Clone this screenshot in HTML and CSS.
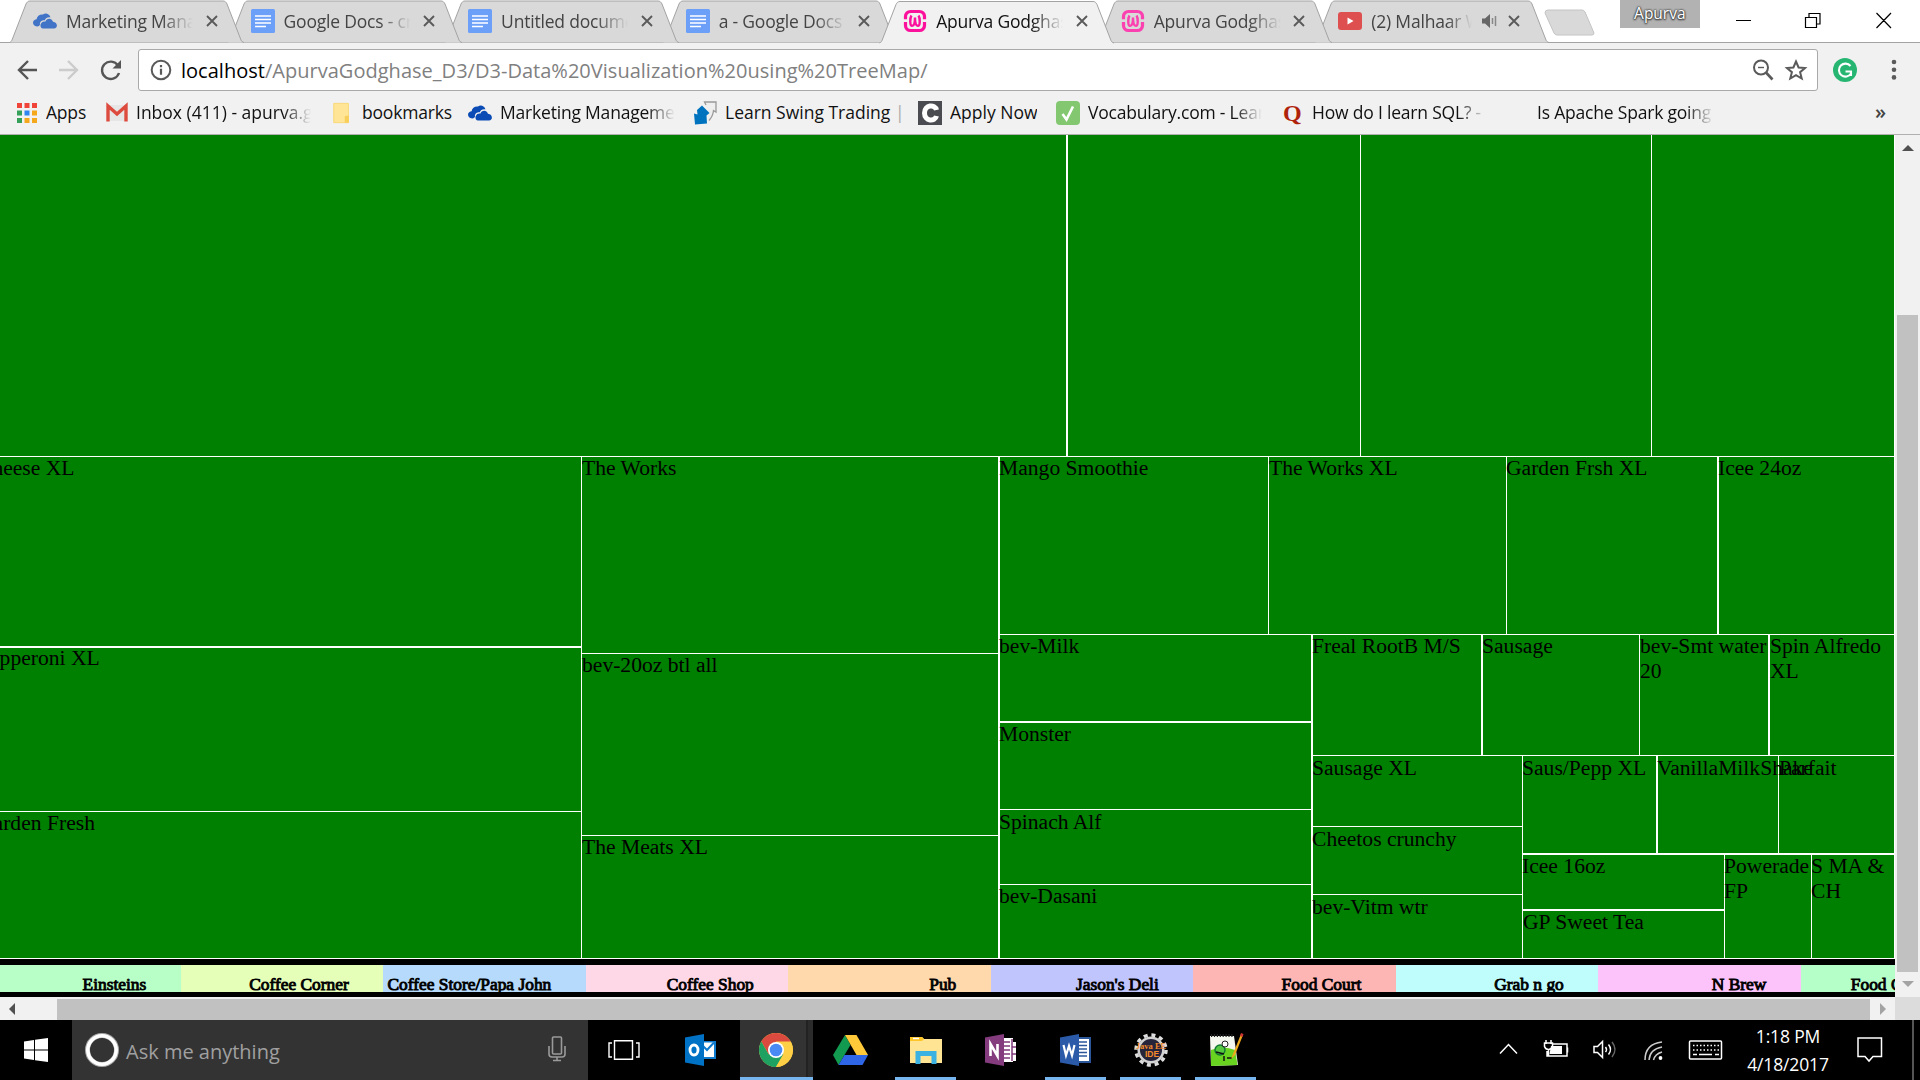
FILE: index.html
```html
<!DOCTYPE html>
<html lang="en">
<head>
<meta charset="utf-8">
<title>Apurva Godghase</title>
<link rel="stylesheet" href="styles.css">
</head>
<body>
<svg width="0" height="0" class="defs">
  <defs>
    <symbol id="tab" viewBox="0 0 236 43"><path class="shape" d="M0.5 42.5 C2 42 2.500 41 3 40 L17 4 C18 2 19 1 21 1 H214 C216 1 217 2 218 4 L232 40 C232.500 41 233 42 235 42.500"/></symbol>
    <symbol id="x" viewBox="0 0 12 12"><path d="M1 1 L11 11 M11 1 L1 11" stroke="#5a5a5a" stroke-width="1.900" fill="none"/></symbol>
    <symbol id="cloud" viewBox="0 0 24 16"><path d="M5 13.500C2 13.500 0 12 0 9.800C0 7.500 2 6.400 3.600 6.300C4 3 7 1 10 1.500C12 0 16 0 17.500 4.500C15 3.800 12.500 5 11.800 7.300C8 7 6.500 9.500 7 12Z"/><path d="M10 15.500C7.500 15.500 7 12.500 7.800 11C8.600 9 10.500 8.200 12.500 8.600C13 5.500 18.500 4 20 8.700C25 9 25 15.500 21 15.500Z"/></symbol>
    <symbol id="doc" viewBox="0 0 24 24"><rect width="24" height="24" rx="1.500" fill="#6b9ff8"/><path d="M4 7h16M4 10.500h16M4 14h16M4 17.500h11" stroke="#fff" stroke-width="1.400"/></symbol>
    <symbol id="wamp" viewBox="0 0 24 24"><path d="M2.500 10.200V7.500A5 5 0 0 1 7.500 2.500h9a5 5 0 0 1 5 5v2.700M21.500 13v3.500a5 5 0 0 1-5 5h-9a5 5 0 0 1-5-5v-3.500" fill="none" stroke="currentColor" stroke-width="3.200"/><path d="M8.500 6.500C6.800 9 6.800 16.500 8.800 16.800C11 17 12 15 12 8.500C12 15 13 17 15.200 16.800C17.200 16.500 17.200 9 15.500 6.500" fill="none" stroke="currentColor" stroke-width="2.400"/></symbol>
  </defs>
</svg>

<div class="tabstrip">
  <div class="tab t1"><svg class="bg"><use href="#tab"/></svg><svg class="fav cloud dim"><use href="#cloud"/></svg><span class="title">Marketing Manage</span><svg class="close"><use href="#x"/></svg></div>
  <div class="tab t2"><svg class="bg"><use href="#tab"/></svg><svg class="fav"><use href="#doc"/></svg><span class="title">Google Docs - create</span><svg class="close"><use href="#x"/></svg></div>
  <div class="tab t3"><svg class="bg"><use href="#tab"/></svg><svg class="fav"><use href="#doc"/></svg><span class="title">Untitled document</span><svg class="close"><use href="#x"/></svg></div>
  <div class="tab t4"><svg class="bg"><use href="#tab"/></svg><svg class="fav"><use href="#doc"/></svg><span class="title">a - Google Docs</span><svg class="close"><use href="#x"/></svg></div>
  <div class="tab active"><svg class="bg"><use href="#tab"/></svg><svg class="fav"><use href="#wamp"/></svg><span class="title">Apurva Godghase</span><svg class="close"><use href="#x"/></svg></div>
  <div class="tab t6"><svg class="bg"><use href="#tab"/></svg><svg class="fav pinkdim"><use href="#wamp"/></svg><span class="title">Apurva Godghase</span><svg class="close"><use href="#x"/></svg></div>
  <div class="tab t7"><svg class="bg"><use href="#tab"/></svg><svg class="fav" viewBox="0 0 24 24"><rect y="3" width="24" height="18" rx="3" fill="#de5050"/><path d="M9.500 8.500v7l6-3.500z" fill="#fff"/></svg><span class="title short">(2) Malhaar Wedding</span><svg class="spk" viewBox="0 0 16 14"><path d="M0 4.500h3L8 0v14l-5-4.500H0z" fill="#666"/><path d="M10.500 4v6M13.500 2v10" stroke="#888" stroke-width="1.500"/></svg><svg class="close"><use href="#x"/></svg></div>
  <svg class="newtab" viewBox="0 0 52 27"><path d="M4 1H38Q40 1 41 3L50 24Q50 26 48 26H13Q11 26 10 24L1 4Q1 1 4 1Z" fill="#d9d9d9" stroke="#c4c4c4"/></svg>
  <div class="user">Apurva</div>
  <svg class="winctl" viewBox="0 0 160 20" fill="none" stroke="#000" stroke-width="1.200"><path d="M0 10.500h15M69.500 7.500h11v10h-11zM73 7V3.500h11v10.500h-3.500M140.500 3l14.500 15M155 3l-14.500 15"/></svg>
</div>

<div class="toolbar">
  <svg class="nav" viewBox="0 0 106 24" fill="none" stroke-width="2.400"><path d="M21 12H3M12 3L3 12L12 21" stroke="#555"/><path d="M43 12H61M52 3L61 12L52 21" stroke="#ccc"/><path d="M102 7.500A8.700 8.700 0 1 0 103 15" stroke="#555" /><path d="M105 2V10.500H96.500Z" fill="#555"/></svg>
  <div class="omni">
    <svg class="info" viewBox="0 0 22 22"><circle cx="11" cy="11" r="9.300" fill="none" stroke="#5a5a5a" stroke-width="2"/><path d="M11 6v2.200M11 9.800v6" stroke="#5a5a5a" stroke-width="2.200"/></svg>
    <span class="url"><b>localhost</b>/ApurvaGodghase_D3/D3-Data%20Visualization%20using%20TreeMap/</span>
    <svg class="omniicons" viewBox="0 0 56 24" fill="none" stroke="#5a5a5a" stroke-width="2"><circle cx="9" cy="9.500" r="7"/><path d="M14 14.500L20.500 21.500" stroke-width="2.600"/><path d="M6 9.500h6" stroke-width="1.400"/><path d="M44 3.500l2.600 6 6.400.5-4.900 4.200 1.600 6.300-5.700-3.400-5.700 3.400 1.600-6.300-4.900-4.200 6.400-.5z"/></svg>
  </div>
  <svg class="gram" viewBox="0 0 24 24"><circle cx="12" cy="12" r="12" fill="#26b672"/><path d="M17.500 8A6.500 6.500 0 1 0 18 15.500M12.500 13.500h5.500v4.500" fill="none" stroke="#fff" stroke-width="2.100"/></svg>
  <svg class="dots" viewBox="0 0 6 22" fill="#5a5a5a"><circle cx="3" cy="3" r="2.300"/><circle cx="3" cy="10.700" r="2.300"/><circle cx="3" cy="18.400" r="2.300"/></svg>
</div>

<div class="bookmarks">
  <a class="bm b1"><svg class="i20" viewBox="0 0 20 20"><path d="M0 0h5v5H0zM7.500 0h5v5h-5zM15 0h5v5h-5z" fill="#f04438"/><path d="M0 7.500h5v5H0zM0 15h5v5H0z" fill="#34a05a"/><path d="M7.500 7.500h5v5h-5z" fill="#2f86f0"/><path d="M15 7.500h5v5h-5zM7.500 15h5v5h-5zM15 15h5v5h-5z" fill="#f5a81c"/></svg><span>Apps</span></a>
  <a class="bm b2"><svg class="i22" viewBox="0 0 22 18"><rect x="1" y="1" width="20" height="16" fill="#e6e6e6"/><path d="M2 17.500V2L11 10L20 2V17.500" fill="none" stroke="#dd4b3e" stroke-width="3.400"/></svg><span class="fade">Inbox (411) - apurva.god</span></a>
  <a class="bm b3"><svg class="i22" viewBox="0 0 22 24"><path d="M2 1.500h16v21H2z" fill="#ffe595" stroke="#f8d873"/><path d="M14 22.500v-6q0-1.500 1.500-1.500h3v7.500z" fill="#f8cf5a"/></svg><span>bookmarks</span></a>
  <a class="bm b4"><svg class="i24 cloud deep"><use href="#cloud"/></svg><span class="fade">Marketing Management</span></a>
  <a class="bm b5"><svg class="i24" viewBox="0 0 24 24"><path d="M13 4L11.500 1H23V11L20.500 9.500Q20 15 16 19.500" fill="#eee" stroke="#999" stroke-width="1.300"/><path d="M9 4.500L16.500 12L13.500 14.500L14 22.500L2 23.500L1 12.500L4.500 13.500L4 9Z" fill="#0073bf"/></svg><span>Learn Swing Trading <em>|</em></span></a>
  <a class="bm b6"><svg class="i24" viewBox="0 0 24 24"><rect width="24" height="24" fill="#4b4b52"/><path d="M18.500 9C17 3 6.500 3.500 6.500 12S17 21 18.500 15" fill="none" stroke="#fff" stroke-width="5"/></svg><span>Apply Now</span></a>
  <a class="bm b7"><svg class="i24" viewBox="0 0 24 24"><rect width="24" height="24" rx="4" fill="#83c870"/><path d="M6.500 13l4 5.500L17 5.500" fill="none" stroke="#fff" stroke-width="2.600"/></svg><span class="fade">Vocabulary.com - Learn W</span></a>
  <a class="bm b8"><i class="quora">Q</i><span class="fade">How do I learn SQL? - Quora</span></a>
  <a class="bm b9"><span class="fade">Is Apache Spark going to</span></a>
  <i class="more">»</i>
</div>

<div class="viewport">
  <div class="page">
    <div class="map col">
      <div class="row" style="height:321px">
        <div class="cell gap-r" style="width:1066px"></div><div class="cell" style="width:292px"></div><div class="cell" style="width:290px"></div><div class="cell"></div>
      </div>
      <div class="row">
        <div class="col" style="width:581px">
          <div class="cell gap-b" style="height:189px"><p class="cut">Cheese XL</p></div>
          <div class="cell" style="height:163px"><p class="cut up1">Pepperoni XL</p></div>
          <div class="cell"><p class="cut">Garden Fresh</p></div>
        </div>
        <div class="col gap-r" style="width:416px">
          <div class="cell" style="height:196px"><p class="in">The Works</p></div>
          <div class="cell" style="height:181px"><p class="in">bev-20oz btl all</p></div>
          <div class="cell"><p class="in">The Meats XL</p></div>
        </div>
        <div class="col">
          <div class="row" style="height:177px">
            <div class="cell" style="width:268px"><p>Mango Smoothie</p></div>
            <div class="cell" style="width:237px"><p class="in">The Works XL</p></div>
            <div class="cell gap-r" style="width:210px"><p>Garden Frsh XL</p></div>
            <div class="cell"><p>Icee 24oz</p></div>
          </div>
          <div class="row">
            <div class="col gap-r" style="width:311px">
              <div class="cell gap-b" style="height:86px"><p>bev-Milk</p></div>
              <div class="cell" style="height:86px"><p>Monster</p></div>
              <div class="cell" style="height:74px"><p class="down1">Spinach Alf</p></div>
              <div class="cell"><p>bev-Dasani</p></div>
            </div>
            <div class="col">
              <div class="row" style="height:120px">
                <div class="cell gap-r" style="width:168px"><p>Freal RootB M/S</p></div>
                <div class="cell" style="width:156px"><p>Sausage</p></div>
                <div class="cell gap-r" style="width:128px"><p class="in">bev-Smt water 20</p></div>
                <div class="cell"><p class="in">Spin Alfredo XL</p></div>
              </div>
              <div class="row">
                <div class="col" style="width:209px">
                  <div class="cell" style="height:70px"><p class="down1">Sausage XL</p></div>
                  <div class="cell" style="height:67px"><p class="down1">Cheetos crunchy</p></div>
                  <div class="cell"><p class="down1">bev-Vitm wtr</p></div>
                </div>
                <div class="col">
                  <div class="row gap-b" style="height:97px">
                    <div class="cell gap-r" style="width:133px"><p class="down1">Saus/Pepp XL</p></div>
                    <div class="cell" style="width:120px"><p class="down1">VanillaMilkShake</p></div>
                    <div class="cell"><p class="down1 in">Parfait</p></div>
                  </div>
                  <div class="row">
                    <div class="col" style="width:201px">
                      <div class="cell gap-b" style="height:54px"><p>Icee 16oz</p></div>
                      <div class="cell"><p class="in">GP Sweet Tea</p></div>
                    </div>
                    <div class="cell" style="width:86px"><p>Powerade FP</p></div>
                    <div class="cell"><p>S MA &amp; CH</p></div>
                  </div>
                </div>
              </div>
            </div>
          </div>
        </div>
      </div>
    </div>
    <div class="legend">
      <span class="c1">Einsteins</span><span class="c2">Coffee Corner</span><span class="c3">Coffee Store/Papa John</span><span class="c4">Coffee Shop</span><span class="c5">Pub</span><span class="c6">Jason's Deli</span><span class="c7">Food Court</span><span class="c8">Grab n go</span><span class="c9">N Brew</span><span class="c10">Food Court</span>
    </div>
  </div>
  <div class="vbar"><i class="up"></i><i class="thumb"></i><i class="down"></i></div>
</div>
<div class="hbar"><i class="left"></i><i class="thumb"></i><i class="right"></i><i class="corner"></i></div>

<div class="taskbar">
  <div class="start"><svg viewBox="0 0 24 24"><path d="M0 3.500L10 2v9.500H0zM11 1.800L24 0v11.500H11zM0 12.500h10V22L0 20.500zM11 12.500h13V24L11 22.200z" fill="#fff"/></svg></div>
  <div class="search">
    <svg class="ring" viewBox="0 0 34 34"><circle cx="17" cy="17" r="14.500" fill="none" stroke="#aaa" stroke-width="5"/><circle cx="17" cy="17" r="14.200" fill="none" stroke="#fff" stroke-width="3.600"/></svg>
    <span>Ask me anything</span>
    <svg class="mic" viewBox="0 0 18 26" fill="none" stroke="#9a9a9a" stroke-width="1.600"><rect x="4.500" y="1" width="9" height="17" rx="1"/><path d="M1 10v8q0 3 3 3h10q3 0 3-3v-8M9 21v3.500M5 24.500h8"/></svg>
  </div>
  <div class="apps">
    <div class="app"><svg class="tv" viewBox="0 0 32 20" fill="none" stroke="#fff" stroke-width="1.400"><path d="M4 3H1v14h3M28 3h3v14h-3M6.500 .7h18v18.600h-18z"/></svg></div>
    <div class="app"><svg viewBox="0 0 34 34"><path d="M18 8h14v18H18z" fill="#0f7bcf"/><path d="M18 9.500h12V24H18z" fill="#fff"/><path d="M18 12l5 5 7-7.500" fill="none" stroke="#0f7bcf" stroke-width="2"/><path d="M1 4.500L20 1v32L1 29.500z" fill="#0072c6"/><ellipse cx="10" cy="17" rx="4" ry="5" fill="none" stroke="#fff" stroke-width="2.800"/></svg></div>
    <div class="app on chrome"><svg viewBox="0 0 34 34"><circle cx="17" cy="17" r="17" fill="#ffcf45"/><path d="M2.300 8.500A17 17 0 0 1 31.700 8.500H17L9.600 21.300z" fill="#db4a3f"/><path d="M2.300 8.500A17 17 0 0 0 17 34L24.400 21.300H9.600z" fill="#1fa162"/><path d="M17 9H32a17 17 0 0 1-15 25l7.400-12.700z" fill="#ffcf45"/><circle cx="17" cy="17" r="8" fill="#fff"/><circle cx="17" cy="17" r="6.300" fill="#4a8af4"/></svg></div>
    <div class="app"><svg class="drive" viewBox="0 0 35 30"><path d="M12 0L0 20l5.500 10L17.500 10z" fill="#129a51"/><path d="M12 0h11.500L35 20H23.500z" fill="#ffc93a"/><path d="M11.500 20H35l-5.500 10h-24z" fill="#2f66e8"/></svg></div>
    <div class="app on"><svg viewBox="0 0 34 34"><path d="M1 4h12l2 2h18v24H1z" fill="#ffe494"/><path d="M1 4h12l2 2-2 2H1z" fill="#ffc627"/><path d="M4 5.500h6" stroke="#fff" stroke-width="1.400"/><path d="M6.500 31V18h21v13h-5v-8h-11v8z" fill="#3cb2e2"/></svg></div>
    <div class="app"><svg viewBox="0 0 34 34"><path d="M18 5h11v4h3v19h-3v1H18z" fill="#fff"/><path d="M20 9h6M20 13h6M20 17h6M20 21h6M20 25h6M28 6v22M28 14h4M28 21h4" stroke="#80397b" stroke-width="1.500"/><path d="M1 4.500L20 1v32L1 29.500z" fill="#843c7e"/><path d="M6.500 23V11l7 12V11" fill="none" stroke="#fff" stroke-width="2.600"/></svg></div>
    <div class="app on"><svg viewBox="0 0 34 34"><path d="M18 4h14v26H18z" fill="#2b579a"/><path d="M18 6h12v22H18z" fill="#fff"/><path d="M20 9h8M20 12.500h8M20 16h8M20 19.500h8M20 23h8" stroke="#2b579a" stroke-width="1.700"/><path d="M1 4.500L20 1v32L1 29.500z" fill="#2b5ba8"/><path d="M4.500 12l2.500 10.500 3-9.500 3 9.500L15.500 12" fill="none" stroke="#fff" stroke-width="2.200"/></svg></div>
    <div class="app on"><svg viewBox="0 0 34 34"><circle cx="17" cy="17" r="15" fill="none" stroke="#ddd" stroke-width="3.500" stroke-dasharray="4 3.850"/><circle cx="17" cy="17" r="12.300" fill="#26243a" stroke="#d2d2d2" stroke-width="2.500"/><g fill="#f58a2b" text-anchor="middle"><text x="17" y="15.500" class="jee">Java EE</text><text x="18" y="23.500" class="ide">IDE</text></g></svg></div>
    <div class="app on"><svg viewBox="0 0 34 34"><path d="M1 3h24l4 29L2 33z" fill="#f4f8ee"/><path d="M2 17q12-5 24 0l2.500 15L2 33z" fill="#68d420"/><path d="M2 2.500h22" stroke="#222" stroke-width="3" stroke-dasharray="1.200 1.700"/><ellipse cx="11" cy="17" rx="5" ry="5" fill="#55c840" stroke="#173" stroke-width="1.400"/><circle cx="16" cy="11" r="3" fill="#fff" stroke="#222"/><path d="M7 19l8 2M15 23v5M18 25h5" stroke="#111" stroke-width="1.500"/><path d="M22 26l2-5L32 1l2 1-8 20z" fill="#f0a91b"/><path d="M31 3l1-3 2.500 1-1 3z" fill="#c33"/></svg></div>
  </div>
  <div class="tray">
    <svg class="glyphs" viewBox="0 0 226 28" fill="none" stroke="#fff" stroke-width="1.500"><path d="M1 17.500L9.500 8.500L18 17.500"/><path d="M54 8h14v12H48V15M68.500 11.500v5M47 4v4M52 4v4M45.500 7h8v3.500q-1 3-4 3t-4-3zM49.500 13v7"/><path d="M52 10h11v8H50.500z" fill="#fff" stroke="none"/><path d="M95 10.500h3.500l5-5v16l-5-5H95zM106.500 11q2 2.500 0 5M109.500 8.500q4 5 0 10"/><path d="M113 6q6 7.500 0 15" stroke="#666"/><g stroke="#ccc"><path d="M146 24Q146 8 163 6M150 24Q151 13 163 11M154.500 24Q156 18 163 16"/></g><circle cx="161.500" cy="22" r="1.900" fill="#fff" stroke="none"/><rect x="190.500" y="5" width="32" height="18" rx="1"/><path d="M194 9.500h26M194 14h26" stroke-dasharray="1.500 2"/><path d="M194 18.500h4M200 18.500h13M216 18.500h4"/></svg>
    <div class="clock"><span>1:18 PM</span><span>4/18/2017</span></div>
    <svg class="action" viewBox="0 0 26 26" fill="none" stroke="#fff" stroke-width="1.500"><path d="M1 1h23.500v18.500H16l-4 4.500-4-4.500H1z"/></svg>
    <i class="peek"></i>
  </div>
</div>
</body>
</html>
```
FILE: styles.css
```css
* { box-sizing: border-box; }
body { margin: 0; width: 1920px; height: 1080px; overflow: hidden; display: flex; flex-direction: column; background: #fff; font-family: "Open Sans", "Noto Sans", sans-serif; }
.defs { position: absolute; }
svg { display: block; flex: none; overflow: visible; }
i, em { font-style: normal; }

/* Tab strip */
.tabstrip { height: 43px; flex: none; display: flex; align-items: flex-start; padding-left: 9px; background: #fff; box-shadow: inset 0 -1px #a3a3a3; }
.tab { position: relative; width: 235.550px; height: 43px; margin-right: -18px; display: flex; align-items: center; padding: 0 0 1px 24px; flex: none; color: #444; }
.tab .bg { position: absolute; left: 0; top: 0; width: 236px; height: 43px; z-index: -1; fill: #d9d9d9; stroke: #a3a3a3; stroke-width: 1; }
.t1 { z-index: 6; } .t2 { z-index: 5; } .t3 { z-index: 4; } .t4 { z-index: 3; } .t6 { z-index: 2; } .t7 { z-index: 1; }
.active { z-index: 9; color: #111; }
.tab.active .bg { fill: #f1f1f1; height: 44px; }
.fav { width: 24px; height: 24px; color: #fb119c; }
.fav.cloud { height: 16px; }
.dim { fill: #4173c6; }
.pinkdim { color: #fb40b0; }
.title { width: 127px; margin-left: 9px; font-size: 17.500px; line-height: 24px; letter-spacing: -0.200px; white-space: nowrap; overflow: hidden; -webkit-mask-image: linear-gradient(90deg, #000 75%, transparent); mask-image: linear-gradient(90deg, #000 75%, transparent); }
.title.short { width: 101px; }
.spk { width: 16px; height: 14px; margin: 0 0 0 10px; }
.close { width: 12px; height: 12px; margin-left: 12.500px; }
.spk + .close { margin-left: 10px; }
.newtab { width: 52px; height: 27px; margin: 9px 0 0 12px; }
.user { width: 80px; height: 28px; margin-left: 24px; background: #b2b2b2; color: #fff; font-size: 15.500px; line-height: 27px; text-align: center; text-shadow: 0 0 2px #333, 0 0 2px #333, 0 1px 2px #333; }
.winctl { width: 160px; height: 20px; margin: 10px 0 0 36px; }

/* Toolbar */
.toolbar { height: 52px; flex: none; display: flex; align-items: center; background: #f1f1f1; padding-left: 16px; }
.nav { width: 106px; height: 24px; margin-top: 2px; }
.omni { width: 1680px; height: 42px; margin-left: 16px; margin-top: 1px; display: flex; align-items: center; background: #fff; border: 1px solid #a9a9a9; border-radius: 3px; padding-left: 11px; }
.info { width: 22px; height: 22px; margin-top: 1px; }
.url { margin: 2px auto 0 9px; font-size: 20px; line-height: 28px; color: #808080; white-space: nowrap; letter-spacing: 0.020px; }
.url b { font-weight: 400; color: #000; }
.omniicons { width: 56px; height: 24px; margin: 1px 9px 0 0; }
.gram { width: 24px; height: 24px; margin: 2px 0 0 15px; }
.dots { width: 6px; height: 22px; margin: 2px 0 0 34px; }

/* Bookmarks */
.bookmarks { height: 40px; flex: none; display: flex; background: #f1f1f1; border-bottom: 1px solid #b0b0b0; padding-left: 17px; color: #111; }
.bm { display: flex; align-items: center; flex: none; height: 36px; font-size: 17.500px; letter-spacing: -0.200px; white-space: nowrap; }
.bm span { margin-left: 9px; overflow: hidden; line-height: 24px; margin-top: -2px; }
.b1 { width: 89px; } .b2 { width: 225px; } .b3 { width: 137px; } .b4 { width: 225px; } .b5 { width: 225px; }
.b6 { width: 138px; } .b7 { width: 227px; } .b8 { width: 253px; } .b9 { width: 339px; }
.bm.b2 span { width: 175px; margin-left: 8px; letter-spacing: 0; } .bm.b4 span { width: 175px; margin-left: 8px; }
.bm.b5 span { margin-left: 8px; letter-spacing: 0; }
.b5 em { color: #aaa; }
.bm.b7 span, .bm.b8 span { width: 174px; margin-left: 8px; } .bm.b9 span { width: 177px; margin-left: 1px; }
.bm.b6 span { margin-left: 8px; letter-spacing: 0; }
.fade { -webkit-mask-image: linear-gradient(90deg, #000 84%, transparent); mask-image: linear-gradient(90deg, #000 84%, transparent); }
.i20 { width: 20px; height: 20px; } .i22 { width: 22px; height: 22px; } .i24 { width: 24px; height: 24px; }
.cloud.i24 { height: 16px; } .deep { fill: #0a4bb5; }
.quora { width: 21px; font: bold 24px "Liberation Serif", serif; color: #b0230b; }
.more { font-size: 20px; line-height: 34px; color: #444; font-weight: 600; }

/* Page area */
.viewport { height: 862px; flex: none; display: flex; }
.page { width: 1895px; height: 862px; overflow: hidden; background: #000; }
.map { width: 1895px; height: 824px; background: #fff; padding: 0 1px 1px 0; }
.row, .col { display: flex; gap: 1px; flex: none; min-width: 0; min-height: 0; }
.col { flex-direction: column; }
.row > :last-child, .col > :last-child { flex: 1; }
.gap-r { margin-right: 1px; }
.gap-b { margin-bottom: 1px; }
.cell { background: green; flex: none; min-width: 0; min-height: 0; }
.cell p { position: relative; margin: -1px 0 0 -1px; font: 21.600px/25px "Liberation Serif", serif; color: #000; }
.cell .cut { margin-left: -22px; white-space: nowrap; }
.cell .up1 { margin-top: -2px; }
.cell .down1 { margin-top: 0; }
.cell .in { margin-left: 0; }
.legend { display: flex; height: 27px; margin-top: 6px; overflow: hidden; }
.legend span { width: 202.500px; flex: none; padding: 7px 34.500px 0 0; text-align: right; white-space: nowrap; font: 17.400px/24px "Liberation Serif", serif; -webkit-text-stroke: 0.900px #000; }
.legend .c1 { width: 180.800px; background: #b7ffc6; } .c2 { background: #e5ffb8; } .c3 { background: #b5dafb; } .c4 { background: #ffd8e8; } .c5 { background: #ffd9ac; }
.c6 { background: #c0c5fe; } .c7 { background: #feb6b4; } .c8 { background: #bffdfd; } .c9 { background: #fcc2fa; }
.legend .c10 { background: #b5ffc9; text-align: left; padding-left: 50px; }

/* Scroll bars */
.vbar { width: 25px; display: flex; flex-direction: column; align-items: center; background: #f1f1f1; padding-top: 10px; }
.up { border: 6px solid transparent; border-top: 0; border-bottom: 6px solid #505050; }
.vbar .thumb { width: 21px; height: 657px; margin: 164px 0 9px; background: #c1c1c1; }
.down { border: 6px solid transparent; border-bottom: 0; border-top: 6px solid #a3a3a3; }
.hbar { height: 23px; flex: none; display: flex; align-items: center; background: #f1f1f1; padding-left: 9px; }
.left { border: 6.500px solid transparent; border-left: 0; border-right: 6px solid #505050; }
.hbar .thumb { width: 1813px; height: 21px; margin: 2px 10px 0 42px; background: #c1c1c1; }
.right { border: 6.500px solid transparent; border-right: 0; border-left: 6px solid #a3a3a3; }
.corner { width: 25px; height: 23px; margin-left: auto; background: #dcdcdc; }

/* Taskbar */
.taskbar { height: 60px; flex: none; display: flex; background: #000; }
.start { width: 72px; padding: 18px 24px; }
.start svg { width: 24px; height: 24px; }
.search { width: 516px; background: #333; display: flex; align-items: center; padding: 0 22px 0 13px; }
.ring { width: 34px; height: 34px; }
.search span { margin: 2px auto 0 7px; font-size: 20px; letter-spacing: 0; color: #a0a0a0; }
.mic { width: 18px; height: 26px; margin-top: -2px; }
.apps { display: flex; }
.app { width: 75px; height: 60px; display: flex; align-items: center; justify-content: center; }
.app svg { width: 34px; height: 34px; }
.app .tv { width: 32px; height: 20px; margin-right: 3px; }
.app .drive { width: 35px; height: 30px; }
.app.on { background: linear-gradient(#76b5ee, #76b5ee) 50% 100% / 61px 3px no-repeat; }
.app.chrome { background: linear-gradient(#76b5ee, #76b5ee) 0 100% / 100% 3px no-repeat, linear-gradient(90deg, #333 66px, #222 66px, #222 68px, #2b2b2b 68px); width: 73px; margin: 0 0 0 2px; padding-right: 1px; }
.jee { font: bold 8.500px "Liberation Serif", serif; } .ide { font: bold 8.500px "Liberation Sans", sans-serif; }
.tray { margin-left: auto; display: flex; align-items: flex-start; }
.glyphs { width: 226px; height: 28px; margin-top: 16px; margin-right: 2px; }
.clock { width: 90px; margin: 2px 0 0 16px; display: flex; flex-direction: column; text-align: center; color: #fff; font-size: 17.500px; line-height: 28px; letter-spacing: -0.150px; }
.action { width: 26px; height: 26px; margin: 17px 0 0 24px; }
.peek { width: 2px; height: 60px; margin: 0 6px 0 29px; background: #555; }
```
